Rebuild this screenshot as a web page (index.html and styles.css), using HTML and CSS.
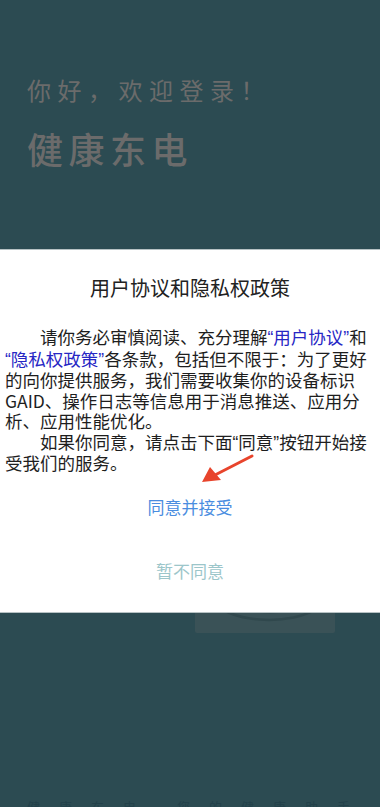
FILE: index.html
```html
<!DOCTYPE html>
<html lang="zh-CN">
<head>
<meta charset="utf-8">
<title>健康东电</title>
<link rel="stylesheet" href="styles.css">
</head>
<body>
<div class="screen">
  <div class="greeting">你好，欢迎登录！</div>
  <div class="brand">健康东电</div>
  <svg class="logo" width="140" height="34" viewBox="0 0 140 34">
    <rect x="0" y="0" width="140" height="34" rx="2" fill="#3a5257"/>
    <g fill="none" stroke="#30484d" stroke-width="2.5">
      <path d="M15 0 A62 30 0 0 0 125 8"/>
      <path d="M30 0 A50 24 0 0 0 114 4"/>
      <path d="M44 0 A38 16 0 0 0 104 0"/>
    </g>
  </svg>
  <div class="footer">健康东电 您的健康助手</div>
</div>

<div class="dialog">
  <h1 class="dialog-title">用户协议和隐私权政策</h1>
  <div class="dialog-body">
    <p class="para">请你务必审慎阅读、充分理解<span class="link"><span class="q">“</span>用户协议<span class="q">”</span></span>和<span class="link"><span class="q">“</span>隐私权政策<span class="q">”</span></span>各条款，包括但不限于：为了更好的向你提供服务，我们需要收集你的设备标识GAID、操作日志等信息用于消息推送、应用分析、应用性能优化。</p>
    <p class="para">如果你同意，请点击下面<span class="q">“</span>同意<span class="q">”</span>按钮开始接受我们的服务。</p>
  </div>
  <div class="actions">
    <button class="btn btn-accept">同意并接受</button>
    <button class="btn btn-decline">暂不同意</button>
  </div>
  <svg class="arrow" width="60" height="34" viewBox="0 0 60 34">
    <path d="M51 4 L14 23" stroke="#e8442c" stroke-width="3" stroke-linecap="round" fill="none"/>
    <path d="M1 30 L9 15 L20 28 Z" fill="#e8442c"/>
  </svg>
</div>
</body>
</html>
```

FILE: styles.css
```css
html, body {
  margin: 0;
  padding: 0;
}
body {
  width: 380px;
  height: 807px;
  overflow: hidden;
  background: #2c4b52;
  font-family: "Noto Sans CJK SC", "Noto Sans", sans-serif;
}
.screen {
  position: relative;
  height: 807px;
  display: flex;
  flex-direction: column;
  padding: 74px 0 0 27px;
  box-sizing: border-box;
}
.greeting {
  font-size: 24px;
  line-height: 32px;
  letter-spacing: 6.5px;
  color: #6b6b6b;
}
.brand {
  margin-top: 20px;
  font-size: 36px;
  line-height: 44px;
  letter-spacing: 5.5px;
  font-weight: 500;
  color: #6b6b6b;
}
.logo {
  position: absolute;
  left: 195px;
  top: 599px;
  display: block;
}
.footer {
  margin-top: auto;
  margin-bottom: -12px;
  font-size: 13px;
  line-height: 24px;
  letter-spacing: 19px;
  color: #23414a;
  white-space: nowrap;
}
.dialog {
  position: absolute;
  top: 249px;
  left: 0;
  width: 380px;
  height: 364px;
  box-sizing: border-box;
  background: #fff;
  border-top: 1px solid #b7c2c4;
  border-bottom: 1px solid #b7c2c4;
  display: flex;
  flex-direction: column;
}
.dialog-title {
  margin: 24px 0 0;
  text-align: center;
  font-size: 20px;
  line-height: 28px;
  font-weight: 400;
  color: #222;
}
.dialog-body {
  margin-top: 25px;
  padding: 0 6px 0 5px;
}
.para {
  margin: 0;
  text-indent: 35px;
  font-size: 17.5px;
  line-height: 20.5px;
  color: #1e1e1e;
}
.q {
  font-family: "Liberation Sans", sans-serif;
}
.link {
  color: #2626c4;
}
.actions {
  display: flex;
  flex-direction: column;
  align-items: center;
  margin-top: 21px;
  gap: 40px;
}
.btn {
  border: 0;
  background: none;
  padding: 0;
  font-family: inherit;
  font-size: 17px;
  line-height: 24px;
}
.btn-accept {
  color: #4a8de0;
}
.btn-decline {
  color: #9cc6ca;
}
.arrow {
  position: absolute;
  left: 201px;
  top: 202px;
}
```
